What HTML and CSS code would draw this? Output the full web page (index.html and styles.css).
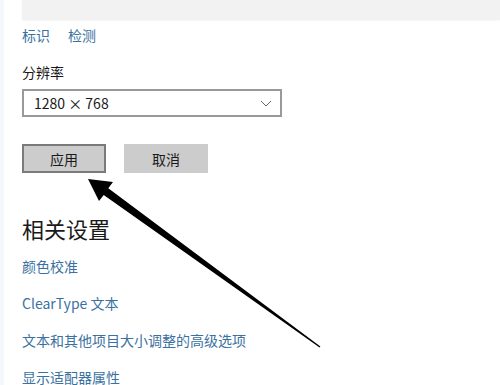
FILE: index.html
```html
<!DOCTYPE html>
<html lang="zh-CN">
<head>
    <meta charset="UTF-8">
    <title>显示设置</title>
    <link rel="stylesheet" href="styles.css">
</head>
<body>

<div class="page">
    <div class="preview"></div>

    <div class="link-row">
        <a class="link" href="#">标识</a>
        <a class="link" href="#">检测</a>
    </div>

    <div class="field-label">分辨率</div>
    <div class="select">
        <span>1280 × 768</span>
        <svg class="chevron" width="12" height="7" viewBox="0 0 12 7">
            <polyline points="1,1 6,6 11,1" fill="none" stroke="#666" stroke-width="1"/>
        </svg>
    </div>

    <div class="buttons">
        <button class="btn btn-focus">应用</button>
        <button class="btn">取消</button>
    </div>

    <h2 class="section-title">相关设置</h2>
    <ul class="related">
        <li><a class="link" href="#">颜色校准</a></li>
        <li><a class="link" href="#">ClearType 文本</a></li>
        <li><a class="link" href="#">文本和其他项目大小调整的高级选项</a></li>
        <li><a class="link" href="#">显示适配器属性</a></li>
    </ul>
</div>

<!-- arrow annotation drawn over the page -->
<svg class="arrow" width="500" height="385" viewBox="0 0 500 385">
    <polygon points="88,179 113,182 108.3,188.3 320.4,346.6 319.6,347.4 103.7,194.9 99,201" fill="#000"/>
</svg>

</body>
</html>
```

FILE: styles.css
```css
body, html {
    margin: 0;
    padding: 0;
    background: #fff;
    font-family: "Noto Sans CJK SC", "Noto Sans", sans-serif;
    color: #1a1a1a;
}
body {
    border-left: 4px solid #f4f8fc;
    height: 385px;
    overflow: hidden;
    box-sizing: border-box;
}
.page {
    padding-left: 18px;
}
.preview {
    height: 20px;
    background: #f2f2f2;
    box-shadow: 0 1px 2px rgba(0, 0, 0, 0.04);
}
.link {
    color: #3a71a0;
    text-decoration: none;
    font-size: 14px;
}
.link-row {
    margin-top: 5px;
    font-size: 14px;
    line-height: 20px;
    display: flex;
    gap: 18px;
}
.field-label {
    margin-top: 17px;
    font-size: 14px;
    line-height: 20px;
}
.select {
    margin-top: 7px;
    width: 260px;
    height: 28px;
    box-sizing: border-box;
    border: 2px solid #999;
    display: flex;
    align-items: center;
    justify-content: space-between;
    padding: 0 8px 0 10px;
    font-size: 14px;
}
.chevron {
    display: block;
}
.buttons {
    margin-top: 27px;
    display: flex;
    gap: 18px;
}
.btn {
    width: 84px;
    height: 29px;
    border: 2px solid #ccc;
    background: #cccccc;
    font-family: inherit;
    font-size: 14px;
    color: #1a1a1a;
    padding: 0;
}
.btn-focus {
    border-color: #7a7a7a;
}
.section-title {
    margin: 40px 0 0;
    font-size: 22px;
    font-weight: normal;
    line-height: 30px;
}
.related {
    list-style: none;
    margin: 13px 0 0;
    padding: 0;
}
.related li {
    font-size: 14px;
    line-height: 20px;
    height: 20px;
    margin-bottom: 17px;
}
.arrow {
    position: absolute;
    left: 0;
    top: 0;
    pointer-events: none;
}
```
